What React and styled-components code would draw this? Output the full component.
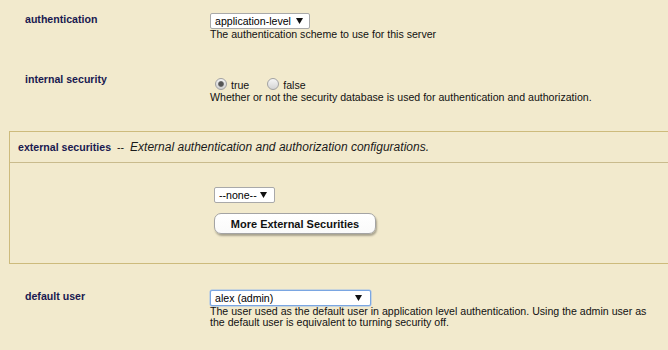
import React from "react";
import styled, { createGlobalStyle } from "styled-components";

const GlobalStyle = createGlobalStyle`
  html, body {
    margin: 0;
    padding: 0;
    background: #f2eacd;
    overflow: hidden;
  }
  body {
    font-family: "Liberation Sans", Arial, sans-serif;
    font-size: 10.6px;
    color: #111;
  }
`;

const Page = styled.div`
  width: 668px;
  display: flex;
  flex-direction: column;
`;

const Row = styled.div`
  display: grid;
  grid-template-columns: 210px 1fr;
  padding: 13px 15px 20px 0;
`;

const Label = styled.div`
  padding-left: 25px;
  font-weight: bold;
  color: #191950;
  line-height: 13px;
`;

const Value = styled.div`
  display: flex;
  flex-direction: column;
  align-items: flex-start;
`;

const Select = styled.div`
  display: flex;
  align-items: center;
  justify-content: space-between;
  box-sizing: border-box;
  height: 16px;
  width: ${(p) => p.$w}px;
  padding: 0 ${(p) => p.$pr || 6}px 0 4px;
  background: #fff;
  border: 1px solid ${(p) => (p.$focused ? "#7aa6e2" : "#a9a9a9")};
  box-shadow: ${(p) => (p.$focused ? "0 0 0 0.5px #9dbdea" : "none")};
  border-radius: 2px;
  color: #000;
  line-height: 14px;
  white-space: nowrap;
`;

const Arrow = () => (
  <svg width="7" height="6" viewBox="0 0 7 6">
    <polygon points="0,0 7,0 3.5,6" fill="#111" />
  </svg>
);

const Desc = styled.div`
  line-height: 11px;
  color: #111;
`;

const Options = styled.div`
  display: flex;
  align-items: flex-end;
  gap: 13px;
  padding-top: 5px;
`;

const Option = styled.label`
  display: flex;
  align-items: flex-end;
  line-height: 13px;
  color: #111;
`;

const Radio = styled.input.attrs({ type: "radio" })`
  appearance: none;
  -webkit-appearance: none;
  box-sizing: border-box;
  width: 12px;
  height: 12px;
  margin: 0 4px 2px 5px;
  border: 1px solid #a2a2a2;
  border-radius: 50%;
  background: linear-gradient(#f6f6f6, #d4d4d4);
  &:checked {
    background: radial-gradient(circle at center, #555 0 2px, #7d7d7d 2.6px, transparent 3.3px),
      linear-gradient(#f2f2f2, #d0d0d0);
  }
`;

const Box = styled.section`
  margin: 8px -20px 13px 9px;
  border: 1px solid #cdbb7c;
`;

const BoxHeader = styled.div`
  display: flex;
  align-items: center;
  height: 30px;
  padding: 0 8px;
  border-bottom: 1px solid #c9bb8d;
  white-space: nowrap;
`;

const BoxTitle = styled.span`
  font-weight: bold;
  color: #191950;
`;

const Sep = styled.span`
  margin: 0 6px;
  color: #111;
`;

const BoxNote = styled.span`
  font-style: italic;
  font-size: 12px;
  color: #1a1a1a;
`;

const BoxBody = styled.div`
  display: flex;
  flex-direction: column;
  align-items: flex-start;
  gap: 10px;
  padding: 24px 0 29px 204px;
`;

const Button = styled.button`
  box-sizing: border-box;
  width: 162px;
  height: 21px;
  padding: 0;
  border: 1px solid #a4a4a4;
  border-radius: 7px;
  background: linear-gradient(#ffffff, #fafafa);
  box-shadow: 1px 2px 2px rgba(0, 0, 0, 0.3);
  font-family: "Liberation Sans", Arial, sans-serif;
  font-size: 11px;
  font-weight: bold;
  color: #111;
`;

export default function App() {
  return (
    <>
      <GlobalStyle />
      <Page>
        <Row>
          <Label>authentication</Label>
          <Value>
            <Select $w={100}>
              <span>application-level</span>
              <Arrow />
            </Select>
            <Desc>The authentication scheme to use for this server</Desc>
          </Value>
        </Row>
        <Row>
          <Label>internal security</Label>
          <Value>
            <Options>
              <Option>
                <Radio name="internal" defaultChecked />
                true
              </Option>
              <Option>
                <Radio name="internal" />
                false
              </Option>
            </Options>
            <Desc>Whether or not the security database is used for authentication and authorization.</Desc>
          </Value>
        </Row>
        <Box>
          <BoxHeader>
            <BoxTitle>external securities</BoxTitle>
            <Sep>--</Sep>
            <BoxNote>External authentication and authorization configurations.</BoxNote>
          </BoxHeader>
          <BoxBody>
            <Select $w={61} $pr={7}>
              <span>--none--</span>
              <Arrow />
            </Select>
            <Button>More External Securities</Button>
          </BoxBody>
        </Box>
        <Row>
          <Label>default user</Label>
          <Value>
            <Select $w={161} $pr={8} $focused>
              <span>alex (admin)</span>
              <Arrow />
            </Select>
            <Desc>
              The user used as the default user in application level authentication. Using the admin user as the
              default user is equivalent to turning security off.
            </Desc>
          </Value>
        </Row>
      </Page>
    </>
  );
}
